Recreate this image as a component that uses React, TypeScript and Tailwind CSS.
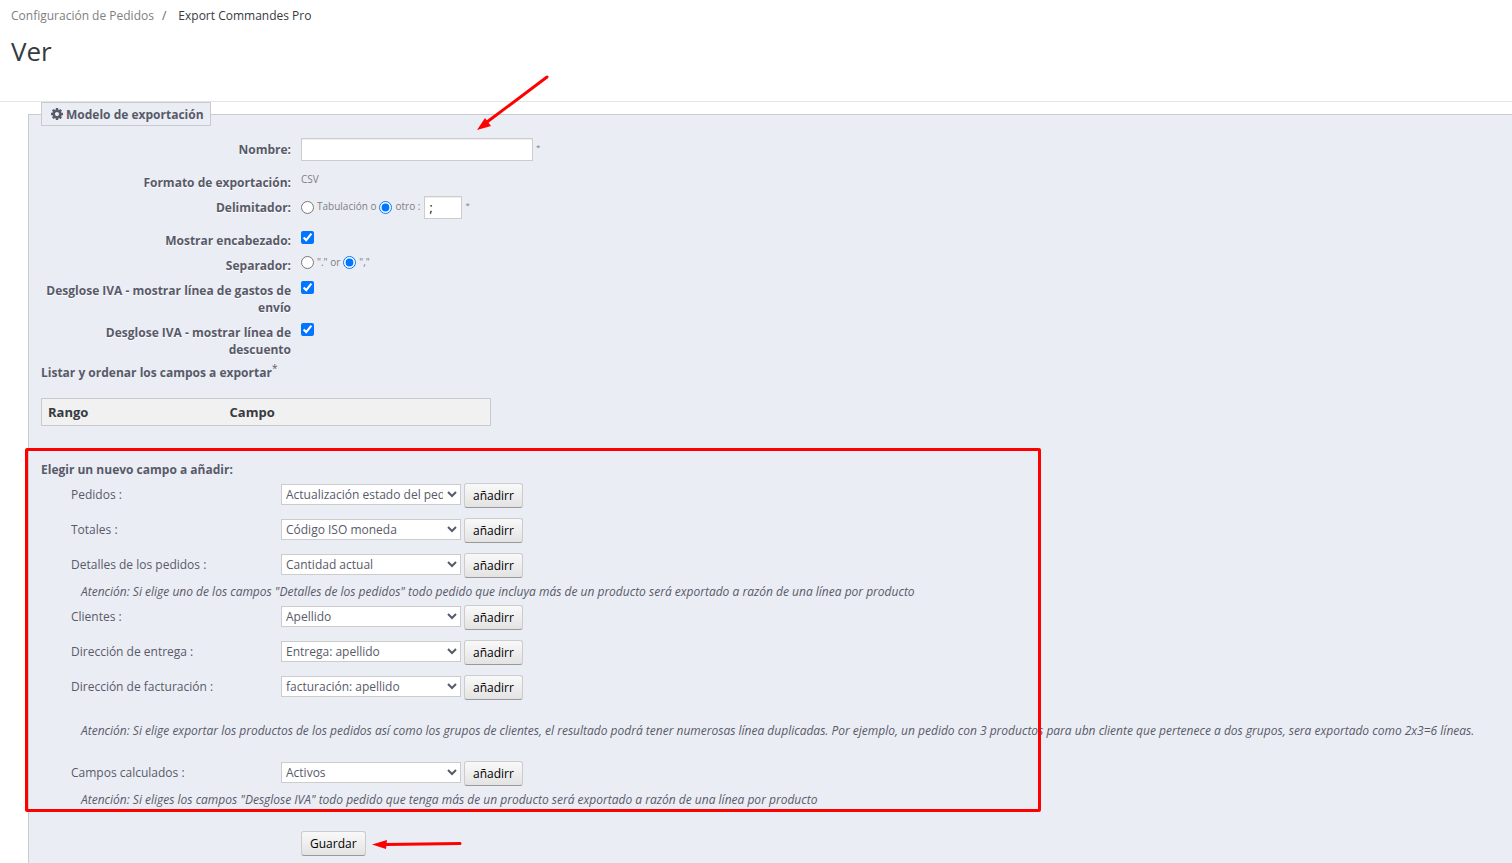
import type { ReactNode } from "react";

/* -------------------------------------------------------------------------- */
/* Data                                                                       */
/* -------------------------------------------------------------------------- */

interface FieldGroup {
  id: string;
  label: string;
  option: string;
}

const ORDER_GROUPS: FieldGroup[] = [
  { id: "orders", label: "Pedidos :", option: "Actualización estado del pedido" },
  { id: "totals", label: "Totales :", option: "Código ISO moneda" },
  { id: "details", label: "Detalles de los pedidos :", option: "Cantidad actual" },
];

const CUSTOMER_GROUPS: FieldGroup[] = [
  { id: "customers", label: "Clientes :", option: "Apellido" },
  { id: "delivery", label: "Dirección de entrega :", option: "Entrega: apellido" },
  { id: "invoice", label: "Dirección de facturación :", option: "facturación: apellido" },
];

const CALCULATED_GROUP: FieldGroup = {
  id: "calculated",
  label: "Campos calculados :",
  option: "Activos",
};

/* -------------------------------------------------------------------------- */
/* Parts                                                                      */
/* -------------------------------------------------------------------------- */

const BUTTON =
  "h-[25px] rounded-[3px] border border-[#cccccc] border-b-[#999999] bg-linear-to-b from-[#f9f9f9] to-[#e3e3e3] px-2 text-xs text-black";

const INPUT =
  "h-[23px] border border-[#cccccc] bg-white px-1 text-xs text-black shadow-[inset_0_1px_1px_#eeeeee]";

function CogIcon() {
  return (
    <svg className="mr-[2px] size-[14px]" viewBox="0 0 1792 1792" fill="currentColor" aria-hidden="true">
      <path d="M1152 896q0-106-75-181t-181-75-181 75-75 181 75 181 181 75 181-75 75-181zm512-109v222q0 12-8 23t-20 13l-185 28q-19 54-39 91 35 50 107 138 10 12 10 25t-9 23q-27 37-99 108t-94 71q-12 0-26-9l-138-108q-44 23-91 38-16 136-29 186-7 28-36 28h-222q-14 0-24.5-8.5t-11.5-21.5l-28-184q-49-16-90-37l-141 107q-10 9-25 9-14 0-25-11-126-114-165-168-7-10-7-23 0-12 8-23 15-21 51-66.5t54-70.5q-27-50-41-99l-183-27q-13-2-21-12.5t-8-23.5v-222q0-12 8-23t19-13l186-28q14-46 39-92-40-57-107-138-10-12-10-24 0-10 9-23 26-36 98.5-107.5t94.5-71.5q13 0 26 10l138 107q44-23 91-38 16-136 29-186 7-28 36-28h222q14 0 24.5 8.5t11.5 21.5l28 184q49 16 90 37l142-107q9-9 24-9 13 0 25 10 129 119 165 170 7 8 7 22 0 12-8 23-15 21-51 66.5t-54 70.5q26 50 41 98l183 28q13 2 21 12.5t8 23.5z" />
    </svg>
  );
}

function Row({
  label,
  htmlFor,
  tall,
  children,
}: {
  label: string;
  htmlFor?: string;
  tall?: boolean;
  children: ReactNode;
}) {
  return (
    <div className={tall ? "flex min-h-[33px]" : "flex min-h-[25px] pb-[5px]"}>
      <label
        htmlFor={htmlFor}
        className="mr-[10px] w-[250px] shrink-0 pt-[3px] text-right font-bold [text-shadow:0_1px_0_#ffffff]"
      >
        {label}
      </label>
      <div className="flex items-start text-[10px] text-[#7f7f7f]">{children}</div>
    </div>
  );
}

function FieldPicker({ group }: { group: FieldGroup }) {
  return (
    <div className="mb-[10px] ml-[30px] flex items-start">
      <label htmlFor={group.id} className="w-[210px] pt-[3px]">
        {group.label}
      </label>
      <select
        id={group.id}
        className="mt-px mr-[3px] h-[21px] w-[180px] border border-[#cccccc] bg-white pr-px text-xs text-[#585a69]"
      >
        <option>{group.option}</option>
      </select>
      <button type="button" className={BUTTON}>
        añadirr
      </button>
    </div>
  );
}

function Note({ children }: { children: ReactNode }) {
  return <p className="ml-[40px] whitespace-nowrap italic">{children}</p>;
}

/* -------------------------------------------------------------------------- */
/* Page                                                                       */
/* -------------------------------------------------------------------------- */

export default function App() {
  return (
    <div className="flex h-screen flex-col overflow-hidden bg-white font-['Open_Sans',sans-serif] text-xs leading-[17px] text-[#585a69]">
      <header className="h-[102px] shrink-0 border-b border-[#e5e5e5] px-[11px] pt-[7px]">
        <nav className="flex">
          <a href="#config" className="text-[#808080]">
            Configuración de Pedidos
          </a>
          <span className="mr-3 ml-2 text-[#666666]">/</span>
          <span className="text-[#363a41]">Export Commandes Pro</span>
        </nav>
        <h1 className="mt-[11px] text-[26px] leading-8 text-[#363a41]">Ver</h1>
      </header>

      <fieldset className="relative ml-7 min-w-0 grow border border-r-0 border-b-0 border-[#c8cacf] bg-[#ebedf4] pl-3">
        <legend className="flex h-6 items-center border border-[#c8cacf] bg-[#ebedf4] pr-[6px] pl-2 font-bold">
          <CogIcon />
          Modelo de exportación
        </legend>

        <div className="pt-3">
          <Row label="Nombre:" htmlFor="name" tall>
            <input id="name" type="text" className={`${INPUT} mr-[3px] w-[232px]`} />
            <sup className="top-0 text-[8px] leading-[17px]">*</sup>
          </Row>
          <Row label="Formato de exportación:">CSV</Row>
          <Row label="Delimitador:" tall>
            <label className="flex pt-[2px]">
              <input type="radio" name="delimiter" className="mt-[3px] mr-[3px] size-[13px]" />
              <span>Tabulación o</span>
            </label>
            <label className="ml-[3px] flex pt-[2px]">
              <input
                type="radio"
                name="delimiter"
                defaultChecked
                className="mt-[3px] mr-[3px] size-[13px]"
              />
              <span>otro :</span>
            </label>
            <input
              type="text"
              defaultValue=";"
              aria-label="Delimitador"
              className={`${INPUT} mr-[3px] ml-1 w-[38px]`}
            />
            <sup className="top-0 text-[8px] leading-[17px]">*</sup>
          </Row>
          <Row label="Mostrar encabezado:" htmlFor="header">
            <input id="header" type="checkbox" defaultChecked className="mt-[2px] size-[13px]" />
          </Row>
          <Row label="Separador:">
            <label className="flex">
              <input type="radio" name="separator" className="mt-[2px] mr-[3px] size-[13px]" />
              <span>"." or</span>
            </label>
            <label className="ml-[3px] flex">
              <input
                type="radio"
                name="separator"
                defaultChecked
                className="mt-[2px] mr-[3px] size-[13px]"
              />
              <span>","</span>
            </label>
          </Row>
          <Row label="Desglose IVA - mostrar línea de gastos de envío" htmlFor="shipping">
            <input id="shipping" type="checkbox" defaultChecked className="mt-[2px] size-[13px]" />
          </Row>
          <Row label="Desglose IVA - mostrar línea de descuento" htmlFor="discount">
            <input id="discount" type="checkbox" defaultChecked className="mt-[2px] size-[13px]" />
          </Row>
        </div>

        <p className="pt-[1px] font-bold">
          Listar y ordenar los campos a exportar
          <sup className="text-[10px] font-normal">*</sup>
        </p>
        <table className="mt-[17px] w-[450px] border border-[#c8cacf] bg-[#f1f1f1] text-left text-[13px] text-[#363a41]">
          <thead>
            <tr className="h-[27px]">
              <th className="w-[182px] pl-[6px] font-bold">Rango</th>
              <th className="pl-[6px] font-bold">Campo</th>
            </tr>
          </thead>
        </table>

        <section className="relative mt-[22px] pt-[13px]">
          <h2 className="mb-[5px] font-bold">Elegir un nuevo campo a añadir:</h2>
          {ORDER_GROUPS.map((g) => (
            <FieldPicker key={g.id} group={g} />
          ))}
          <div className="-mt-[5px] mb-[5px]">
            <Note>
              Atención: Si elige uno de los campos "Detalles de los pedidos" todo pedido que
              incluya más de un producto será exportado a razón de una línea por producto
            </Note>
          </div>
          {CUSTOMER_GROUPS.map((g) => (
            <FieldPicker key={g.id} group={g} />
          ))}
          <div className="pt-3 pb-[22px]">
            <Note>
              Atención: Si elige exportar los productos de los pedidos así como los grupos de
              clientes, el resultado podrá tener numerosas línea duplicadas. Por ejemplo, un
              pedido con 3 productos para ubn cliente que pertenece a dos grupos, sera exportado
              como 2x3=6 líneas.
            </Note>
          </div>
          <FieldPicker group={CALCULATED_GROUP} />
          <div className="-mt-[5px]">
            <Note>
              Atención: Si eliges los campos "Desglose IVA" todo pedido que tenga más de un
              producto será exportado a razón de una línea por producto
            </Note>
          </div>
          {/* highlight frame around the field pickers */}
          <div className="pointer-events-none absolute top-0 -bottom-1 -left-4 w-[1016px] rounded-[2px] border-3 border-[#ff0000]" />
        </section>

        <div className="mt-[23px] ml-[260px] flex">
          <button type="submit" className={BUTTON}>
            Guardar
          </button>
          <div className="relative">
            <svg
              className="pointer-events-none absolute top-1 left-[6px]"
              width="92"
              height="18"
              viewBox="0 0 92 18"
            >
              <path d="M14 9.5 L88 8.5" stroke="#ff0000" strokeWidth="3" strokeLinecap="round" />
              <path d="M0 9.5 L15 5 L14 14 Z" fill="#ff0000" />
            </svg>
          </div>
        </div>

        {/* arrow pointing at the name input */}
        <svg
          className="pointer-events-none absolute -top-13 left-[447px]"
          width="76"
          height="58"
          viewBox="0 0 76 58"
        >
          <path d="M11 48 L71 3" stroke="#ff0000" strokeWidth="3" strokeLinecap="round" />
          <path d="M1 56 L9 44 L15 52 Z" fill="#ff0000" />
        </svg>
      </fieldset>
    </div>
  );
}
